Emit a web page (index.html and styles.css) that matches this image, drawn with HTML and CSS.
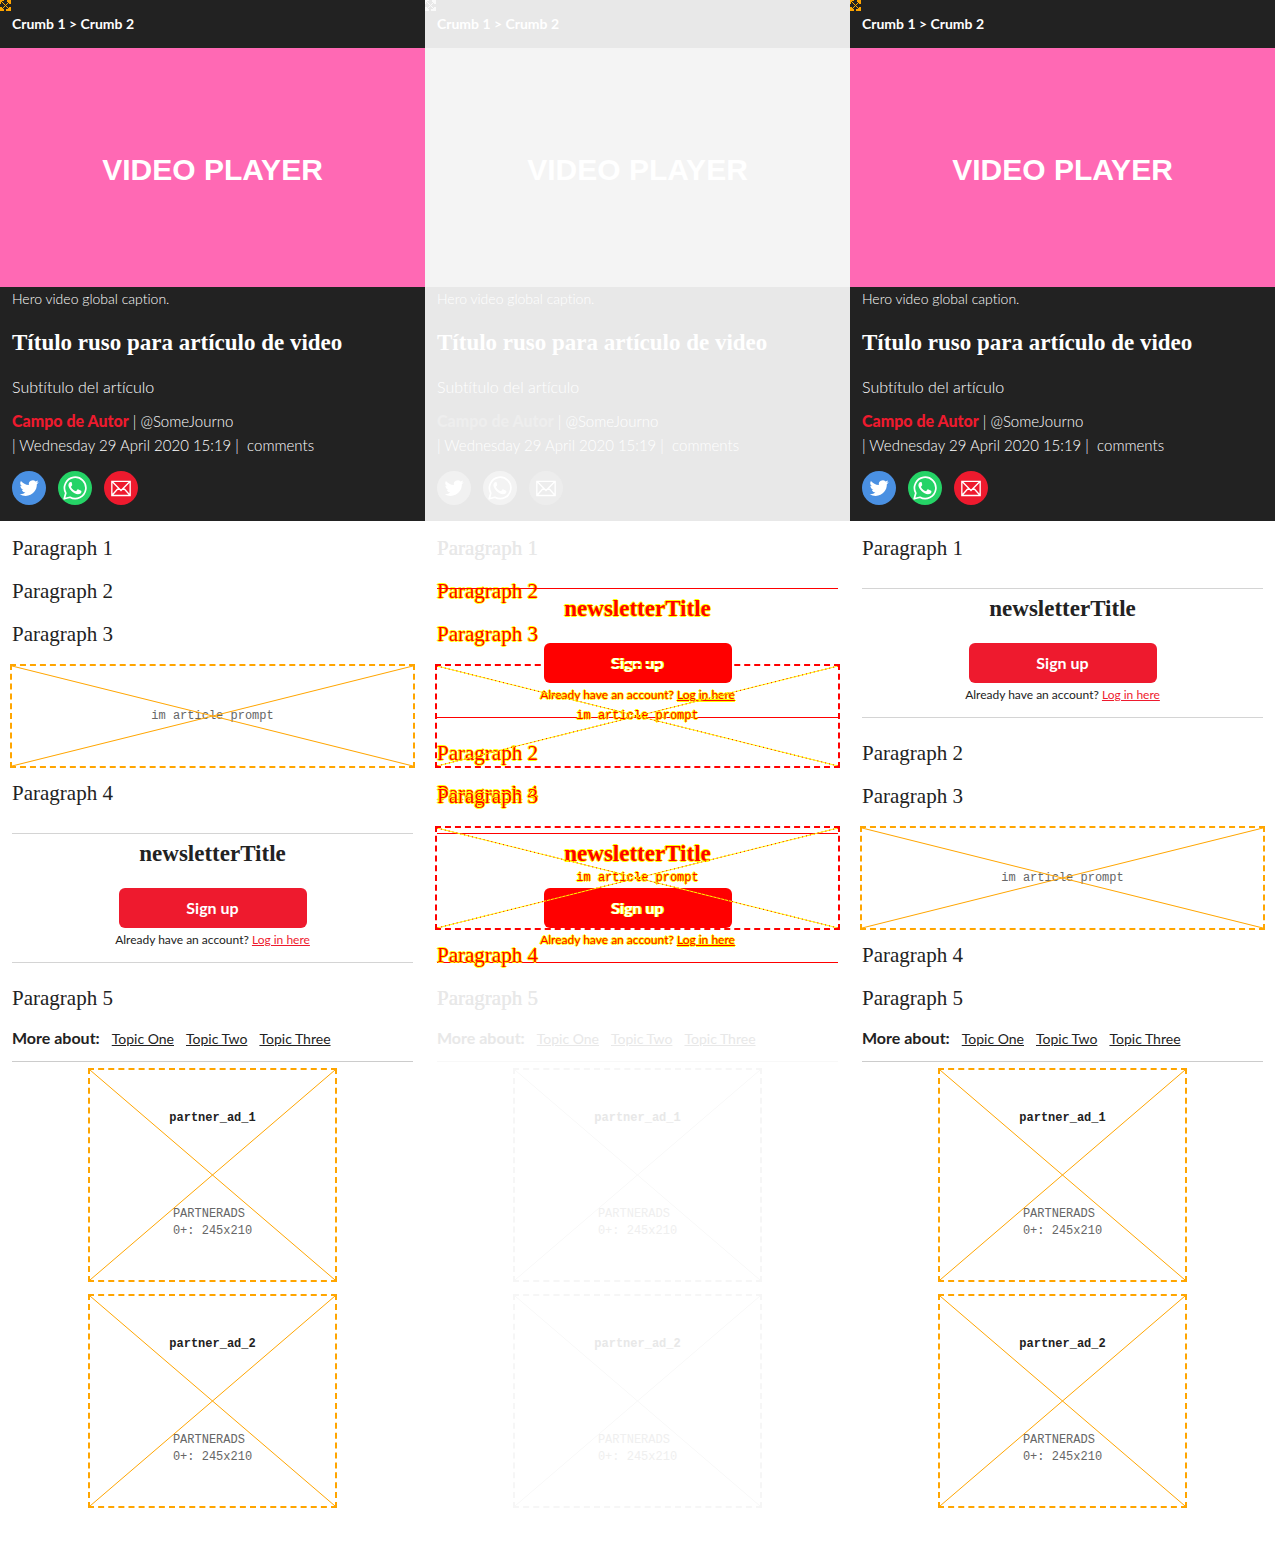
FILE: index.html
```html
<!DOCTYPE html>
<html lang="es">
<head>
<meta charset="utf-8">
<meta name="viewport" content="width=device-width, initial-scale=1">
<title>Título ruso para artículo de video</title>
<link rel="stylesheet" href="styles.css">
</head>
<body>
<svg class="sprite" aria-hidden="true">
  <symbol id="cross" viewBox="0 0 100 100" preserveAspectRatio="none">
    <path class="cross-base" d="M0 0L100 100M100 0L0 100" vector-effect="non-scaling-stroke"/>
    <path class="cross-dots" d="M0 0L100 100M100 0L0 100" vector-effect="non-scaling-stroke"/>
  </symbol>
  <symbol id="mini" viewBox="0 0 11 11">
    <path fill="currentColor" d="M0 0h4v1H2v1H1v2H0zM7 0h4v4H9V2H7zM0 7h2v2h2v2H0zM11 7v4H6V9h3V7z"/>
    <path fill="none" stroke="currentColor" d="M2 2l7 7M9 2L2 9"/>
  </symbol>
  <symbol id="twitter" viewBox="0 0 24 24">
    <path fill="currentColor" d="M23.6 4.9c-.8.4-1.700.6-2.700.800 1-.6 1.700-1.500 2-2.600-.9.5-1.900.9-3 1.100a4.700 4.700 0 0 0-8 4.300C8 8.300 4.600 6.500 2.300 3.700a4.700 4.700 0 0 0 1.500 6.300c-.8 0-1.500-.2-2.200-.6 0 2.300 1.600 4.300 3.800 4.700-.7.2-1.400.2-2.100.1.600 1.900 2.300 3.200 4.400 3.300A9.500 9.500 0 0 1 .8 19.400 13.400 13.400 0 0 0 8 21.500c8.700 0 13.700-7.300 13.400-13.900.9-.7 1.700-1.600 2.200-2.700z"/>
  </symbol>
  <symbol id="whatsapp" viewBox="0 0 24 24">
    <path fill="none" stroke="currentColor" stroke-width="1.700" stroke-linejoin="round" d="M1.200 22.800l1.600-5.700A10.700 10.700 0 1 1 7 21.300z"/>
    <path fill="currentColor" d="M8.700 6.500c-.3-.6-.5-.6-1-.6-.4 0-.9.2-1.200.6-.7.700-1.100 1.600-1.100 2.700 0 3.400 5.200 9 9.600 9 1.600 0 3.200-1 3.400-2.300.1-.7 0-1-.3-1.200l-2.700-1.300c-.4-.2-.7-.1-1 .2l-1.100 1.400c-.3.300-.5.300-.9.100-1.900-.8-3.400-2.200-4.300-3.900-.2-.4-.1-.6.100-.8.600-.7 1.200-1.200 1-1.700z"/>
  </symbol>
  <symbol id="mail" viewBox="0 0 24 24">
    <path fill="none" stroke="currentColor" stroke-width="1.600" d="M1 4h22v17H1zM1 4l11 11L23 4M1 21l8-9M23 21l-8-9"/>
  </symbol>
</svg>

<main class="compare">
  <article class="panel">
    <header class="hero">
      <svg class="mini"><use href="#mini"/></svg>
      <nav class="crumbs">Crumb 1 &gt; Crumb 2</nav>
      <div class="video">VIDEO PLAYER</div>
      <div class="intro">
        <p class="caption">Hero video global caption.</p>
        <h1 class="title">Título ruso para artículo de video</h1>
        <p class="subtitle">Subtítulo del artículo</p>
        <p class="byline"><a class="author" href="#">Campo de Autor</a> | @SomeJourno</p>
        <p class="byline">| Wednesday 29 April 2020 15:19 | &nbsp;comments</p>
        <div class="share">
          <a class="share-link twitter" href="#" aria-label="Twitter"><svg><use href="#twitter"/></svg></a>
          <a class="share-link whatsapp" href="#" aria-label="WhatsApp"><svg><use href="#whatsapp"/></svg></a>
          <a class="share-link mail" href="#" aria-label="Email"><svg><use href="#mail"/></svg></a>
        </div>
      </div>
    </header>
    <div class="story">
      <div class="version">
        <p class="para">Paragraph 1</p>
        <p class="para">Paragraph 2</p>
        <p class="para">Paragraph 3</p>
        <div class="slot slot-prompt"><svg class="cross"><use href="#cross"/></svg><span>im article prompt</span></div>
        <p class="para">Paragraph 4</p>
        <section class="newsletter">
          <h2 class="newsletter-title">newsletterTitle</h2>
          <button class="signup" type="button">Sign up</button>
          <p class="login">Already have an account? <a href="#">Log in here</a></p>
        </section>
        <p class="para">Paragraph 5</p>
      </div>
    </div>
    <footer class="extras">
      <div class="topics"><strong>More about:</strong><a href="#">Topic One</a><a href="#">Topic Two</a><a href="#">Topic Three</a></div>
      <div class="slot slot-ad"><svg class="cross"><use href="#cross"/></svg><strong>partner_ad_1</strong><p>PARTNERADS<br>0+: 245x210</p></div>
      <div class="slot slot-ad"><svg class="cross"><use href="#cross"/></svg><strong>partner_ad_2</strong><p>PARTNERADS<br>0+: 245x210</p></div>
    </footer>
  </article>

  <article class="panel panel-diff">
    <header class="hero">
      <svg class="mini"><use href="#mini"/></svg>
      <nav class="crumbs">Crumb 1 &gt; Crumb 2</nav>
      <div class="video">VIDEO PLAYER</div>
      <div class="intro">
        <p class="caption">Hero video global caption.</p>
        <h1 class="title">Título ruso para artículo de video</h1>
        <p class="subtitle">Subtítulo del artículo</p>
        <p class="byline"><a class="author" href="#">Campo de Autor</a> | @SomeJourno</p>
        <p class="byline">| Wednesday 29 April 2020 15:19 | &nbsp;comments</p>
        <div class="share">
          <a class="share-link twitter" href="#" aria-label="Twitter"><svg><use href="#twitter"/></svg></a>
          <a class="share-link whatsapp" href="#" aria-label="WhatsApp"><svg><use href="#whatsapp"/></svg></a>
          <a class="share-link mail" href="#" aria-label="Email"><svg><use href="#mail"/></svg></a>
        </div>
      </div>
    </header>
    <div class="story">
      <div class="version">
        <p class="para same">Paragraph 1</p>
        <p class="para">Paragraph 2</p>
        <p class="para">Paragraph 3</p>
        <div class="slot slot-prompt"><svg class="cross"><use href="#cross"/></svg><span>im article prompt</span></div>
        <p class="para">Paragraph 4</p>
        <section class="newsletter">
          <h2 class="newsletter-title">newsletterTitle</h2>
          <button class="signup" type="button">Sign up</button>
          <p class="login">Already have an account? <a href="#">Log in here</a></p>
        </section>
        <p class="para same">Paragraph 5</p>
      </div>
      <div class="version">
        <p class="para same">Paragraph 1</p>
        <section class="newsletter">
          <h2 class="newsletter-title">newsletterTitle</h2>
          <button class="signup" type="button">Sign up</button>
          <p class="login">Already have an account? <a href="#">Log in here</a></p>
        </section>
        <p class="para">Paragraph 2</p>
        <p class="para">Paragraph 3</p>
        <div class="slot slot-prompt"><svg class="cross"><use href="#cross"/></svg><span>im article prompt</span></div>
        <p class="para">Paragraph 4</p>
        <p class="para same">Paragraph 5</p>
      </div>
    </div>
    <footer class="extras">
      <div class="topics"><strong>More about:</strong><a href="#">Topic One</a><a href="#">Topic Two</a><a href="#">Topic Three</a></div>
      <div class="slot slot-ad"><svg class="cross"><use href="#cross"/></svg><strong>partner_ad_1</strong><p>PARTNERADS<br>0+: 245x210</p></div>
      <div class="slot slot-ad"><svg class="cross"><use href="#cross"/></svg><strong>partner_ad_2</strong><p>PARTNERADS<br>0+: 245x210</p></div>
    </footer>
  </article>

  <article class="panel">
    <header class="hero">
      <svg class="mini"><use href="#mini"/></svg>
      <nav class="crumbs">Crumb 1 &gt; Crumb 2</nav>
      <div class="video">VIDEO PLAYER</div>
      <div class="intro">
        <p class="caption">Hero video global caption.</p>
        <h1 class="title">Título ruso para artículo de video</h1>
        <p class="subtitle">Subtítulo del artículo</p>
        <p class="byline"><a class="author" href="#">Campo de Autor</a> | @SomeJourno</p>
        <p class="byline">| Wednesday 29 April 2020 15:19 | &nbsp;comments</p>
        <div class="share">
          <a class="share-link twitter" href="#" aria-label="Twitter"><svg><use href="#twitter"/></svg></a>
          <a class="share-link whatsapp" href="#" aria-label="WhatsApp"><svg><use href="#whatsapp"/></svg></a>
          <a class="share-link mail" href="#" aria-label="Email"><svg><use href="#mail"/></svg></a>
        </div>
      </div>
    </header>
    <div class="story">
      <div class="version">
        <p class="para">Paragraph 1</p>
        <section class="newsletter">
          <h2 class="newsletter-title">newsletterTitle</h2>
          <button class="signup" type="button">Sign up</button>
          <p class="login">Already have an account? <a href="#">Log in here</a></p>
        </section>
        <p class="para">Paragraph 2</p>
        <p class="para">Paragraph 3</p>
        <div class="slot slot-prompt"><svg class="cross"><use href="#cross"/></svg><span>im article prompt</span></div>
        <p class="para">Paragraph 4</p>
        <p class="para">Paragraph 5</p>
      </div>
    </div>
    <footer class="extras">
      <div class="topics"><strong>More about:</strong><a href="#">Topic One</a><a href="#">Topic Two</a><a href="#">Topic Three</a></div>
      <div class="slot slot-ad"><svg class="cross"><use href="#cross"/></svg><strong>partner_ad_1</strong><p>PARTNERADS<br>0+: 245x210</p></div>
      <div class="slot slot-ad"><svg class="cross"><use href="#cross"/></svg><strong>partner_ad_2</strong><p>PARTNERADS<br>0+: 245x210</p></div>
    </footer>
  </article>
</main>
</body>
</html>
```

FILE: styles.css
```css
* { box-sizing: border-box; }

body, p, h1, h2 { margin: 0; }

body {
  background: #fff;
  font-family: Lato, "Open Sans", sans-serif;
  font-size: 16px;
  line-height: 24px;
  font-variant-ligatures: none;
}

a { color: inherit; }

.sprite { position: absolute; width: 0; height: 0; }

.compare {
  display: grid;
  grid-template-columns: repeat(3, minmax(0, 1fr));
}

.panel {
  --ink: #222;
  --dark: #222;
  --on-dark: #fff;
  --video: #ff69b4;
  --author: #ee1a2e;
  --twitter: #4a90e2;
  --whatsapp: #25d366;
  --mail: #ee1a2e;
  --rule: #d4d4d4;
  --topic-rule: #ccc;
  --slot: orange;
  --cross: orange;
  --mini: orange;
  --slot-text: #666;
  color: var(--ink);
}

/* Unchanged content is washed out in the comparison panel */
.panel-diff {
  --ink: #e8e8e8;
  --dark: #e8e8e8;
  --on-dark: #fff;
  --video: #f4f4f4;
  --author: #eee;
  --twitter: #f1f1f1;
  --whatsapp: #f3f3f3;
  --mail: #ededed;
  --topic-rule: #f8f8f8;
  --slot: #f6f6f6;
  --cross: #f8f8f8;
  --mini: #fafafa;
  --slot-text: #efefef;
}

.hero {
  position: relative;
  background: var(--dark);
  color: var(--on-dark);
}

.mini {
  position: absolute;
  top: 0;
  left: 0;
  width: 11px;
  height: 11px;
  color: var(--mini);
}

.crumbs {
  padding: 12px;
  font-size: 14px;
  font-weight: 700;
}

.video {
  display: flex;
  align-items: center;
  justify-content: center;
  aspect-ratio: 16 / 9;
  padding-top: 4px;
  background: var(--video);
  font: 700 30px/40px "Liberation Sans", Arial, sans-serif;
}

.intro {
  padding: 0 12px 16px;
  font-weight: 300;
}

.caption { font-size: 14px; }

.title {
  margin: 18px 0;
  font: 700 23px/28px "Liberation Serif", serif;
}

.subtitle { margin-bottom: 10px; }

.byline { font-size: 15px; }

.author {
  color: var(--author);
  font-size: 16px;
  font-weight: 900;
  text-decoration: none;
}

.share {
  display: flex;
  gap: 12px;
  margin-top: 14px;
}

.share-link {
  display: grid;
  place-items: center;
  width: 34px;
  height: 34px;
  border-radius: 50%;
}

.share-link svg { width: 20px; height: 20px; }
.share-link.whatsapp svg { width: 24px; height: 24px; }
.twitter { background: var(--twitter); }
.whatsapp { background: var(--whatsapp); }
.mail { background: var(--mail); }

.story { display: grid; padding: 14px 12px 0; }

/* Both versions share one cell so that they overlay each other */
.version { grid-area: 1 / 1; min-width: 0; }

.para {
  margin-bottom: 17px;
  font: 400 21px/26px "Liberation Serif", serif;
}

.newsletter {
  display: flex;
  flex-direction: column;
  align-items: center;
  margin: 27px 0 22px;
  padding: 6px 0 10px;
  border-top: 1px solid var(--rule);
  border-bottom: 1px solid var(--rule);
}

.newsletter-title {
  margin-bottom: 20px;
  font: 700 23px/28px "Liberation Serif", serif;
}

.signup {
  width: 188px;
  height: 40px;
  border: 0;
  border-radius: 6px;
  background: #ee1a2e;
  color: #fff;
  font: inherit;
  font-weight: 700;
}

.login { font-size: 12px; }
.login a { color: #ee1a2e; }

.slot {
  position: relative;
  border: 2px dashed var(--slot);
  color: var(--slot-text);
  font: 12px/17px "Liberation Mono", "Courier New", monospace;
}

.slot-prompt {
  z-index: 1;
  display: grid;
  place-items: center;
  min-height: 104px;
  margin: 0 -2px 12px;
}

.cross {
  position: absolute;
  inset: 0;
  width: 100%;
  height: 100%;
}

.cross-base { fill: none; stroke: var(--cross); }
.cross-dots { fill: none; stroke: var(--dots, none); stroke-dasharray: 1 3; }

.extras {
  display: flex;
  flex-direction: column;
  align-items: center;
  gap: 12px;
  padding: 0 12px 38px;
}

.topics {
  display: flex;
  align-self: stretch;
  align-items: baseline;
  gap: 12px;
  margin-bottom: -6px;
  padding-bottom: 12px;
  border-bottom: 1px solid var(--topic-rule);
  font-size: 14px;
  line-height: 20px;
}

.topics strong { font-size: 16px; }

.slot-ad {
  display: flex;
  flex-direction: column;
  align-items: center;
  justify-content: space-between;
  width: 249px;
  min-height: 214px;
  padding: 40px 0;
}

.slot-ad strong { color: var(--ink); }

/* Changed content is marked in red with a yellow fringe */
.panel-diff .version {
  --ink: #f00;
  --rule: #f00;
  --slot: #f00;
  --cross: #ff0;
  --dots: #f00;
  --slot-text: #f00;
  color: #f00;
  text-shadow: 1px 0 #ff0, -1px 0 #ff0, 0 1px #ff0, 0 -1px #ff0;
}

.panel-diff .same { color: #e8e8e8; text-shadow: none; }
.panel-diff .signup { background: #f00; text-shadow: 1px 0 #ff0, -1px 0 #ff0; }
.panel-diff .login a { color: #f00; }
```
